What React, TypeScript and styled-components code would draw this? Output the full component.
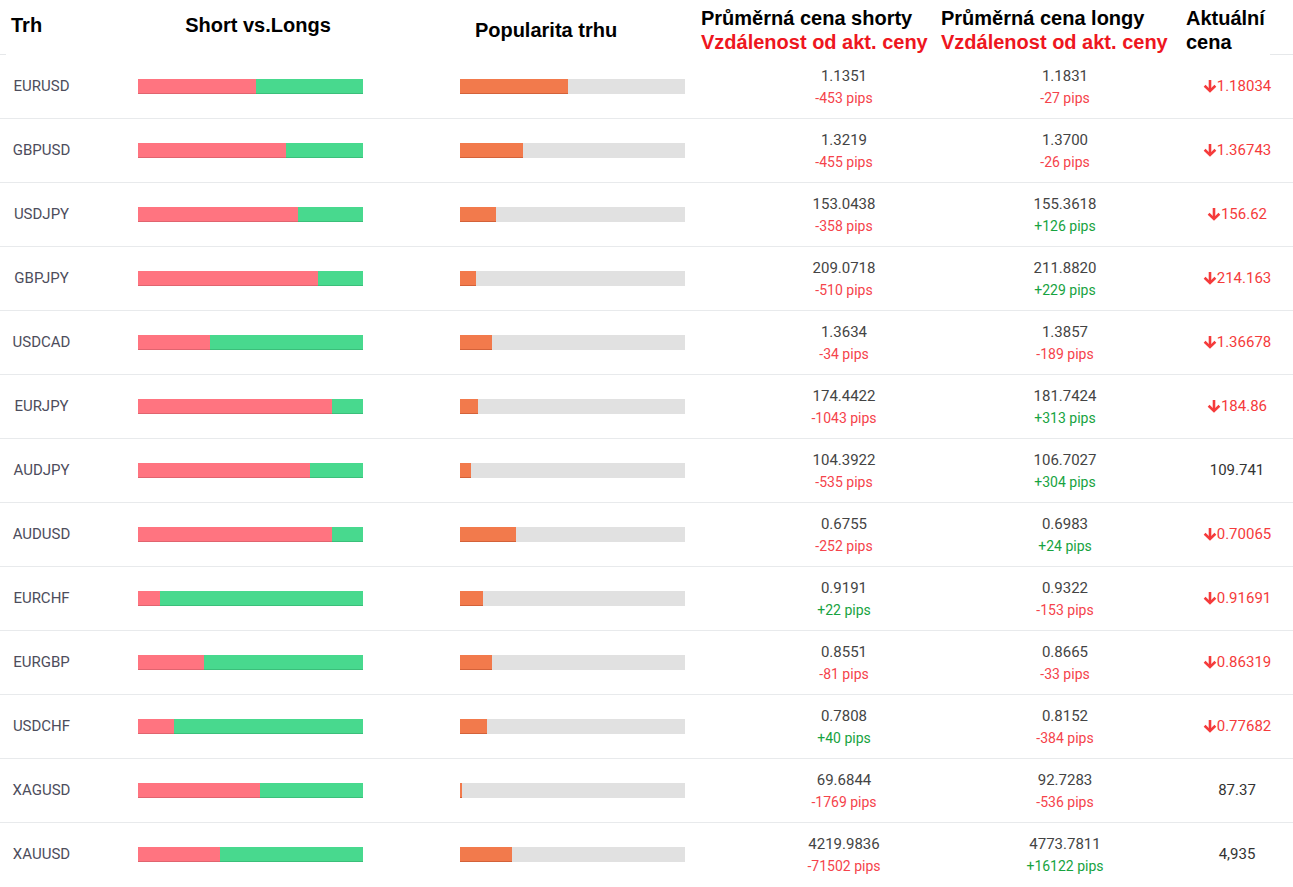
import styled, { createGlobalStyle } from "styled-components";

const GlobalStyle = createGlobalStyle`
  html, body {
    margin: 0;
    padding: 0;
    background: #ffffff;
  }
  body {
    font-family: Roboto, "Noto Sans", sans-serif;
  }
`;

const Table = styled.div`
  width: 1293px;
  display: flex;
  flex-direction: column;
`;

const HeaderRow = styled.div`
  height: 54px;
  border-bottom: 1px solid #e6e8ea;
`;

const HeaderInner = styled.div`
  position: relative;
  height: 55px;
  margin: 0 23px 0 6px;
  background: #ffffff;
  display: grid;
  grid-template-columns: 124px 256px 310px 240px 245px 89px;
  align-items: start;
  font-family: "Liberation Sans", Arial, sans-serif;
  font-weight: bold;
  font-size: 20px;
  line-height: 24px;
  color: #000000;
`;

const HeadCell = styled.div<{ $top: number; $align?: string; $pad?: number }>`
  margin-top: ${({ $top }) => $top}px;
  text-align: ${({ $align }) => $align || "left"};
  padding-left: ${({ $pad }) => $pad || 0}px;
  white-space: nowrap;
`;

const HeadSub = styled.div`
  color: #ee1620;
`;

const Row = styled.div`
  height: 63px;
  border-bottom: 1px solid #e8eaec;
  display: grid;
  grid-template-columns: 83px 328px 322px 222px 220px 118px;
  align-items: center;

  &:last-child {
    border-bottom-color: transparent;
  }
`;

const Market = styled.div`
  text-align: center;
  font-size: 15px;
  line-height: 20px;
  margin-top: -2px;
  color: #4d4d5c;
`;

const BarCell = styled.div<{ $pad: number }>`
  padding-left: ${({ $pad }) => $pad}px;
  display: flex;
`;

const Bar = styled.div`
  width: 225px;
  height: 15px;
  display: flex;
  background: #e1e1e1;
`;

const Segment = styled.div<{ $color: string; $shade: string; $grow?: boolean }>`
  height: 100%;
  background: ${({ $color }) => $color};
  box-shadow: inset 0 -1px 0 ${({ $shade }) => $shade};
  flex: ${({ $grow }) => ($grow ? "1 1 auto" : "0 0 auto")};
`;

const PriceCell = styled.div`
  display: flex;
  flex-direction: column;
  align-items: center;
`;

const Price = styled.div`
  font-size: 15px;
  line-height: 22px;
  color: #444444;
`;

const Pips = styled.div<{ $up: boolean }>`
  font-size: 14px;
  line-height: 22px;
  color: ${({ $up }) => ($up ? "#17a33f" : "#f5434b")};
`;

const Current = styled.div<{ $down: boolean }>`
  padding-left: 6px;
  margin-top: -2px;
  display: flex;
  justify-content: center;
  align-items: center;
  gap: 0;
  font-size: 15px;
  color: ${({ $down }) => ($down ? "#f53b3b" : "#333333")};
`;

const ArrowIcon = styled.svg`
  width: 14px;
  height: 14px;
  flex: 0 0 auto;
`;

function ArrowDown() {
  return (
    <ArrowIcon viewBox="0 0 14 14" fill="none" stroke="currentColor" strokeWidth={2.6}>
      <line x1="7" y1="1" x2="7" y2="12" />
      <polyline points="1.6,6.8 7,12 12.4,6.8" strokeLinejoin="miter" />
    </ArrowIcon>
  );
}

interface MarketRow {
  name: string;
  shorts: number;
  popularity: number;
  shortPrice: string;
  shortPips: string;
  longPrice: string;
  longPips: string;
  current: string;
  down: boolean;
}

const rows: MarketRow[] = [
  { name: "EURUSD", shorts: 52.4, popularity: 48, shortPrice: "1.1351", shortPips: "-453", longPrice: "1.1831", longPips: "-27", current: "1.18034", down: true },
  { name: "GBPUSD", shorts: 65.8, popularity: 28, shortPrice: "1.3219", shortPips: "-455", longPrice: "1.3700", longPips: "-26", current: "1.36743", down: true },
  { name: "USDJPY", shorts: 71.1, popularity: 16, shortPrice: "153.0438", shortPips: "-358", longPrice: "155.3618", longPips: "+126", current: "156.62", down: true },
  { name: "GBPJPY", shorts: 80, popularity: 7.1, shortPrice: "209.0718", shortPips: "-510", longPrice: "211.8820", longPips: "+229", current: "214.163", down: true },
  { name: "USDCAD", shorts: 32, popularity: 14.2, shortPrice: "1.3634", shortPips: "-34", longPrice: "1.3857", longPips: "-189", current: "1.36678", down: true },
  { name: "EURJPY", shorts: 86.2, popularity: 8, shortPrice: "174.4422", shortPips: "-1043", longPrice: "181.7424", longPips: "+313", current: "184.86", down: true },
  { name: "AUDJPY", shorts: 76.4, popularity: 4.9, shortPrice: "104.3922", shortPips: "-535", longPrice: "106.7027", longPips: "+304", current: "109.741", down: false },
  { name: "AUDUSD", shorts: 86.2, popularity: 24.9, shortPrice: "0.6755", shortPips: "-252", longPrice: "0.6983", longPips: "+24", current: "0.70065", down: true },
  { name: "EURCHF", shorts: 9.8, popularity: 10.2, shortPrice: "0.9191", shortPips: "+22", longPrice: "0.9322", longPips: "-153", current: "0.91691", down: true },
  { name: "EURGBP", shorts: 29.3, popularity: 14.2, shortPrice: "0.8551", shortPips: "-81", longPrice: "0.8665", longPips: "-33", current: "0.86319", down: true },
  { name: "USDCHF", shorts: 16, popularity: 12, shortPrice: "0.7808", shortPips: "+40", longPrice: "0.8152", longPips: "-384", current: "0.77682", down: true },
  { name: "XAGUSD", shorts: 54.2, popularity: 1, shortPrice: "69.6844", shortPips: "-1769", longPrice: "92.7283", longPips: "-536", current: "87.37", down: false },
  { name: "XAUUSD", shorts: 36.4, popularity: 23.1, shortPrice: "4219.9836", shortPips: "-71502", longPrice: "4773.7811", longPips: "+16122", current: "4,935", down: false },
];

function PriceBlock({ price, pips }: { price: string; pips: string }) {
  return (
    <PriceCell>
      <Price>{price}</Price>
      <Pips $up={pips.startsWith("+")}>{pips} pips</Pips>
    </PriceCell>
  );
}

export default function App() {
  return (
    <>
      <GlobalStyle />
      <Table>
        <HeaderRow>
          <HeaderInner>
            <HeadCell $top={13} $pad={5}>Trh</HeadCell>
            <HeadCell $top={13} $align="center">Short vs.Longs</HeadCell>
            <HeadCell $top={18} $align="center" $pad={10}>Popularita trhu</HeadCell>
            <HeadCell $top={6} $pad={5}>
              Průměrná cena shorty
              <HeadSub>Vzdálenost od akt. ceny</HeadSub>
            </HeadCell>
            <HeadCell $top={6} $pad={5}>
              Průměrná cena longy
              <HeadSub>Vzdálenost od akt. ceny</HeadSub>
            </HeadCell>
            <HeadCell $top={6} $pad={5}>
              Aktuální
              <br />
              cena
            </HeadCell>
          </HeaderInner>
        </HeaderRow>
        {rows.map((row) => (
          <Row key={row.name}>
            <Market>{row.name}</Market>
            <BarCell $pad={55}>
              <Bar>
                <Segment $color="#ff7480" $shade="#e0646f" style={{ width: `${row.shorts}%` }} />
                <Segment $color="#48d98e" $shade="#3bbf7a" $grow />
              </Bar>
            </BarCell>
            <BarCell $pad={49}>
              <Bar>
                <Segment $color="#f27a4c" $shade="#d3623a" style={{ width: `${row.popularity}%` }} />
              </Bar>
            </BarCell>
            <PriceBlock price={row.shortPrice} pips={row.shortPips} />
            <PriceBlock price={row.longPrice} pips={row.longPips} />
            <Current $down={row.down}>
              {row.down && <ArrowDown />}
              {row.current}
            </Current>
          </Row>
        ))}
      </Table>
    </>
  );
}
